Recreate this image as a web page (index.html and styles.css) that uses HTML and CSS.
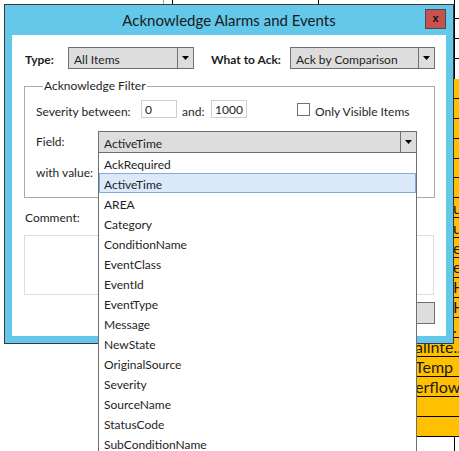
FILE: index.html
```html
<!DOCTYPE html>
<html>
<head>
<meta charset="utf-8">
<title>Acknowledge Alarms and Events</title>
<link rel="stylesheet" href="styles.css">
</head>
<body>
<div class="desktop">
  <div class="bg-lines">
    <div class="vline v-gray" style="left:163px"></div>
    <div class="vline" style="left:172px"></div>
    <div class="vline" style="left:318px"></div>
    <div class="vline" style="left:454px"></div>
  </div>
  <div class="bg-table">
    <div class="trow white"></div>
    <div class="trow white"></div>
    <div class="trow white"></div>
    <div class="trow white noline"></div>
    <div class="trow orange"></div>
    <div class="trow orange"></div>
    <div class="trow orange"></div>
    <div class="trow orange"></div>
    <div class="trow orange"></div>
    <div class="trow orange"></div>
    <div class="trow orange"><span class="frag">u</span></div>
    <div class="trow orange"><span class="frag">u</span></div>
    <div class="trow orange"><span class="frag">e</span></div>
    <div class="trow orange"><span class="frag">e</span></div>
    <div class="trow orange"><span class="frag">H</span></div>
    <div class="trow orange"><span class="frag">H</span></div>
    <div class="trow orange"><span class="frag">.</span></div>
    <div class="trow orange"><span class="cell-text">allnte...</span></div>
    <div class="trow orange"><span class="cell-text">Temp</span></div>
    <div class="trow orange"><span class="cell-text">erflow</span></div>
    <div class="trow orange"></div>
    <div class="trow orange"></div>
  </div>

  <div class="dialog">
    <div class="titlebar">
      <div class="tb-side"></div>
      <div class="title">Acknowledge Alarms and Events</div>
      <div class="tb-side tb-right"><div class="close">x</div></div>
    </div>
    <div class="content">
      <div class="top-row">
        <span class="lbl bold type-lbl">Type:</span>
        <div class="combo w-type">
          <span class="combo-text">All Items</span>
          <span class="combo-arrow"><svg width="7" height="4" viewBox="0 0 7 4"><polygon points="0,0 7,0 3.5,4" fill="#000"/></svg></span>
        </div>
        <span class="lbl bold what-lbl">What to Ack:</span>
        <div class="combo w-what">
          <span class="combo-text">Ack by Comparison</span>
          <span class="combo-arrow"><svg width="7" height="4" viewBox="0 0 7 4"><polygon points="0,0 7,0 3.5,4" fill="#000"/></svg></span>
        </div>
      </div>

      <fieldset class="filter">
        <legend>Acknowledge Filter</legend>
        <div class="f-row sev-row">
          <span class="lbl low sev-lbl">Severity between:</span>
          <div class="textbox w-num">0</div>
          <span class="lbl low and-lbl">and:</span>
          <div class="textbox w-num">1000</div>
          <span class="checkbox"></span>
          <span class="lbl low chk-lbl">Only Visible Items</span>
        </div>
        <div class="f-row field-row">
          <span class="lbl field-lbl">Field:</span>
          <div class="combo w-field">
            <span class="combo-text">ActiveTime</span>
            <span class="combo-arrow"><svg width="7" height="4" viewBox="0 0 7 4"><polygon points="0,0 7,0 3.5,4" fill="#000"/></svg></span>
            <ul class="popup">
              <li>AckRequired</li>
              <li class="selected">ActiveTime</li>
              <li>AREA</li>
              <li>Category</li>
              <li>ConditionName</li>
              <li>EventClass</li>
              <li>EventId</li>
              <li>EventType</li>
              <li>Message</li>
              <li>NewState</li>
              <li>OriginalSource</li>
              <li>Severity</li>
              <li>SourceName</li>
              <li>StatusCode</li>
              <li>SubConditionName</li>
            </ul>
          </div>
        </div>
        <div class="f-row value-row">
          <span class="lbl field-lbl">with value:</span>
          <div class="textbox w-field"></div>
        </div>
      </fieldset>

      <div class="comment-lbl">Comment:</div>
      <div class="comment-box"></div>

      <div class="buttons">
        <div class="btn">OK</div>
        <div class="btn">Cancel</div>
      </div>
    </div>
  </div>
</div>
</body>
</html>
```

FILE: styles.css
```css
html, body {
  margin: 0;
  padding: 0;
  overflow: hidden;
  background: #ffffff;
}

.desktop {
  position: relative;
  width: 459px;
  height: 451px;
  overflow: hidden;
  font-family: "Lato", "Noto Sans", sans-serif;
  font-size: 12px;
  color: #1e1e1e;
}

/* background grid behind the dialog */
.bg-lines {
  position: absolute;
  left: 0;
  top: 0;
  width: 459px;
  height: 451px;
}

.vline {
  position: absolute;
  top: 0;
  width: 1px;
  height: 451px;
  background: #000;
}

.v-gray {
  background: #a0a0a0;
}

.bg-table {
  position: absolute;
  left: 330px;
  top: -0.6px;
  width: 129px;
  display: flex;
  flex-direction: column;
}

.trow {
  box-sizing: border-box;
  height: 19.9px;
  border-bottom: 1px solid #000;
  display: flex;
  align-items: center;
  font-size: 16px;
  line-height: 18px;
  color: #1a1a1a;
  white-space: nowrap;
  overflow: hidden;
}

.trow.noline {
  border-bottom: none;
}

.trow.orange {
  background: #ffc000;
}

.frag {
  margin-left: 123px;
}

.cell-text {
  margin-left: 85px;
}

/* dialog window */
.dialog {
  position: absolute;
  left: 4px;
  top: 4px;
  width: 450px;
  height: 340px;
  box-sizing: border-box;
  border: 1px solid #3a3a3a;
  background: #63c8ea;
  display: flex;
  flex-direction: column;
}

.titlebar {
  height: 30px;
  display: grid;
  grid-template-columns: 1fr auto 1fr;
}

.title {
  font-size: 15px;
  line-height: 30px;
  color: #1a1a1a;
}

.tb-right {
  display: flex;
  justify-content: flex-end;
  align-items: flex-start;
  padding-right: 7px;
}

.close {
  margin-top: 4px;
  width: 21px;
  height: 20px;
  box-sizing: border-box;
  border: 1px solid #4a4a4a;
  background: #c75050;
  font-family: "Liberation Sans", sans-serif;
  font-weight: bold;
  font-size: 11px;
  line-height: 17px;
  text-align: center;
  color: #111;
}

.content {
  margin: 0 7px 7px 7px;
  height: 301px;
  background: #fff;
  display: flex;
  flex-direction: column;
}

.lbl {
  line-height: 16px;
  white-space: nowrap;
}

.lbl.low {
  padding-top: 6px;
}

.bold {
  font-weight: bold;
}

.top-row {
  margin-top: 12px;
  height: 22px;
  padding-left: 13px;
  display: flex;
  align-items: center;
}

.top-row .lbl {
  padding-top: 4px;
}

.type-lbl {
  width: 43px;
}

.what-lbl {
  margin-left: 17px;
  width: 79px;
}

.combo {
  position: relative;
  box-sizing: border-box;
  height: 22px;
  border: 1px solid #707070;
  background: #dddddd;
  display: flex;
  align-items: stretch;
}

.combo-text {
  flex: 1;
  padding: 2px 0 0 5px;
  line-height: 19px;
  white-space: nowrap;
  overflow: hidden;
}

.combo-arrow {
  width: 16px;
  box-sizing: border-box;
  border-left: 1px solid #707070;
  display: flex;
  align-items: center;
  justify-content: center;
}

.w-type { width: 126px; }
.w-what { width: 145px; }
.w-field { width: 319px; }

.filter {
  margin: 9px 0 0 12px;
  width: 411px;
  box-sizing: border-box;
  border: 1px solid #aaaaaa;
  padding: 0 10px 13px 11px;
  min-width: 0;
}

.filter legend {
  margin-left: 7px;
  padding: 0 1px;
  line-height: 16px;
}

.f-row {
  display: flex;
  align-items: center;
}

.sev-row {
  margin-top: 6px;
  height: 18px;
}

.sev-lbl {
  width: 105px;
}

.textbox {
  box-sizing: border-box;
  height: 18px;
  border: 1px solid #cdcfd4;
  background: #fff;
  padding: 1px 0 0 3px;
  line-height: 16px;
}

.w-num { width: 36px; }

.and-lbl {
  margin-left: 5px;
  width: 29px;
}

.checkbox {
  margin-left: 50px;
  width: 13px;
  height: 13px;
  box-sizing: border-box;
  border: 1px solid #707070;
  background: #fff;
}

.chk-lbl {
  margin-left: 5px;
}

.field-row {
  margin-top: 13px;
  height: 22px;
}

.value-row {
  margin-top: 9px;
  height: 22px;
}

.value-row .textbox {
  height: 22px;
}

.field-lbl {
  width: 62px;
}

.popup {
  position: absolute;
  z-index: 10;
  left: -1px;
  top: 100%;
  width: 319px;
  box-sizing: border-box;
  margin: 0;
  padding: 0;
  list-style: none;
  background: #fff;
  border: 1px solid #6e6e6e;
}

.popup li {
  box-sizing: border-box;
  height: 20px;
  border: 1px solid transparent;
  padding: 3px 0 0 4px;
  line-height: 15px;
  white-space: nowrap;
}

.popup li.selected {
  background: #dbe9fb;
  border-color: #86aadb;
}

.comment-lbl {
  margin: 12px 0 0 13px;
  line-height: 16px;
}

.comment-box {
  margin: 9px 0 0 12px;
  width: 410px;
  height: 60px;
  box-sizing: border-box;
  border: 1px solid #dcdce2;
}

.buttons {
  margin-top: 7px;
  padding-right: 11px;
  display: flex;
  justify-content: flex-end;
  gap: 8px;
}

.btn {
  width: 75px;
  height: 22px;
  box-sizing: border-box;
  border: 1px solid #707070;
  background: #dddddd;
  text-align: center;
  line-height: 20px;
}
```
